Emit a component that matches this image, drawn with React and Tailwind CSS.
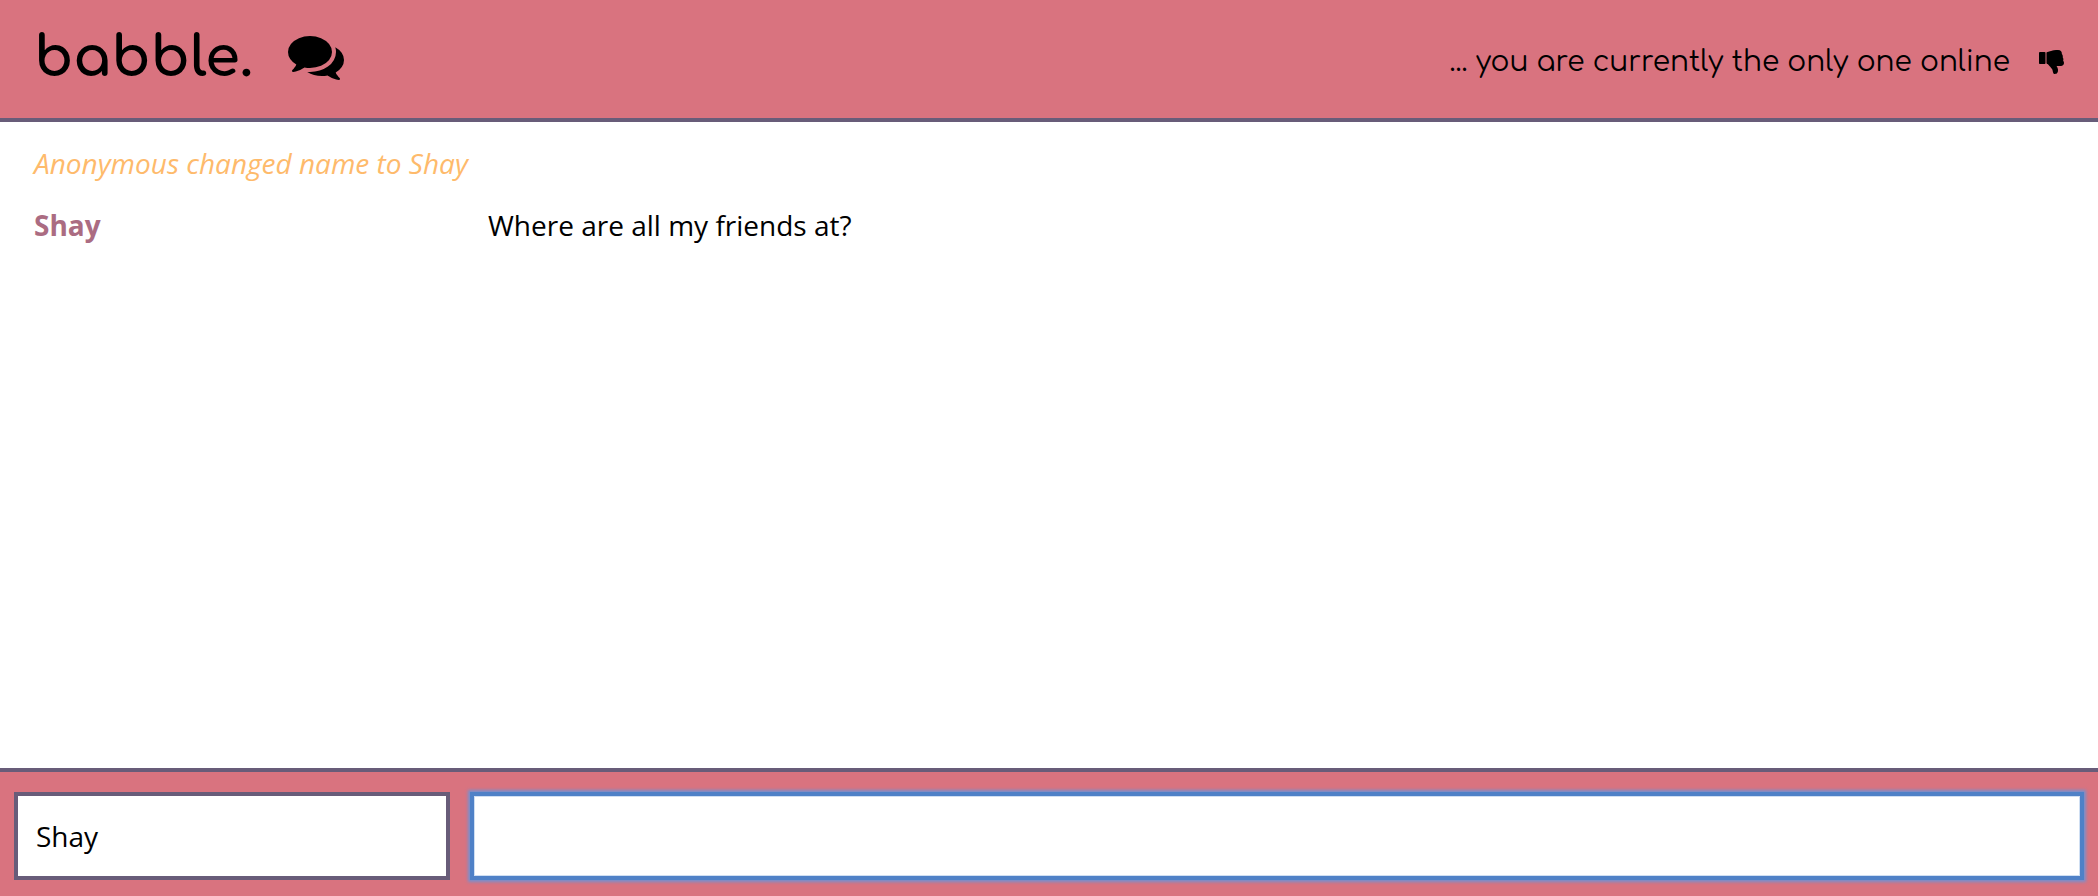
function CommentsIcon({ className }) {
  return (
    <svg viewBox="0 0 1792 1792" fill="currentColor" aria-hidden="true" className={className}>
      <path d="M1408 768q0 139-94 257t-256.5 186.5-353.5 68.5q-86 0-176-16-124 88-278 128-36 9-86 16h-3q-11 0-20.5-8t-11.5-21q-1-3-1-6.5t.5-6.5 2-6l2.5-5 3.5-5.5 4-5 4.5-5 4-4.5q5-6 23-25t26-29.5 22.5-29 25-38.5 20.5-44q-124-72-195-177t-71-224q0-139 94-257t256.5-186.5 353.5-68.5 353.5 68.5 256.5 186.5 94 257zm384 256q0 120-71 224.5t-195 176.5q10 24 20.5 44t25 38.5 22.5 29 26 29.5 23 25q1 1 4 4.5t4.5 5 4 5 3.5 5.5l2.5 5 2 6 .5 6.5-1 6.5q-3 14-13 22t-22 7q-50-7-86-16-154-40-278-128-90 16-176 16-271 0-472-132 58 4 88 4 161 0 309-45t264-129q125-92 192-212t67-254q0-77-23-152 129 71 204 178t75 230z" />
    </svg>
  );
}

function ThumbsDownIcon({ className }) {
  return (
    <svg viewBox="0 0 1664 1792" fill="currentColor" aria-hidden="true" className={className}>
      <path d="M320 448q0-26-19-45t-45-19q-27 0-45.5 19t-18.5 45q0 27 18.5 45.5t45.5 18.5q26 0 45-18.5t19-45.5zm160 512v-640q0-26-19-45t-45-19h-288q-26 0-45 19t-19 45v640q0 26 19 45t45 19h288q26 0 45-19t19-45zm1129-149q55 61 55 149-1 78-57.5 135t-134.5 57h-277q4 14 8 24t11 22 10 18q18 37 27 57t19 58.5 10 76.5q0 24-.5 39t-5 45-12 50-24 45-40 40.5-60 26-82.5 10.5q-26 0-45-19-20-20-34-50t-19.5-52-12.5-61q-9-42-13.5-60.5t-17.5-48.5-31-48q-33-33-101-120-49-64-101-121t-76-59q-25-2-43-20.5t-18-43.5v-641q0-26 19-44.5t45-19.5q35-1 158-44 77-26 120.5-39.5t121.5-29 144-15.5h129q133 2 197 78 58 69 49 181 39 37 54 94 17 61 0 117 46 61 43 137 0 32-15 76z" />
    </svg>
  );
}

export default function App() {
  return (
    <div className="flex h-screen flex-col bg-white font-['Open_Sans','Noto_Sans',sans-serif] text-[28px] leading-10 text-black">
      <header className="flex shrink-0 items-end justify-between border-b-4 border-[#685c79] bg-[#d9737f] px-[34px] pt-[26px] pb-8 font-['Comfortaa','Quicksand','Lato',sans-serif]">
        <div className="flex items-center gap-[35px]">
          <h1 className="pt-1 text-[56px] leading-14 font-bold">babble.</h1>
          <CommentsIcon className="size-14" />
        </div>
        <div className="flex items-center gap-7 pb-1">
          <p>... you are currently the only one online</p>
          <ThumbsDownIcon className="h-7 w-[26px]" />
        </div>
      </header>
      <main className="flex-1 px-[34px] pt-[21px]">
        <p className="text-[#feba6b] italic">Anonymous changed name to Shay</p>
        <div className="mt-[22px] flex">
          <span className="w-[454px] font-bold text-[#ab6c82]">Shay</span>
          <p>Where are all my friends at?</p>
        </div>
      </main>
      <form className="flex shrink-0 gap-5 border-t-4 border-[#685c79] bg-[#d9737f] px-[14px] pt-5 pb-4">
        <input aria-label="Name" defaultValue="Shay" className="h-[88px] w-[436px] border-4 border-[#685c79] bg-white px-[18px]" />
        <input aria-label="Message" autoFocus className="h-[88px] min-w-0 flex-1 border-4 border-[#685c79] bg-white px-[18px] caret-transparent focus:border-[#4f81c7] focus:shadow-[0_0_3px_2px_#7490d0,inset_0_0_0_1px_#cfdff3] focus:outline-none" />
      </form>
    </div>
  );
}
